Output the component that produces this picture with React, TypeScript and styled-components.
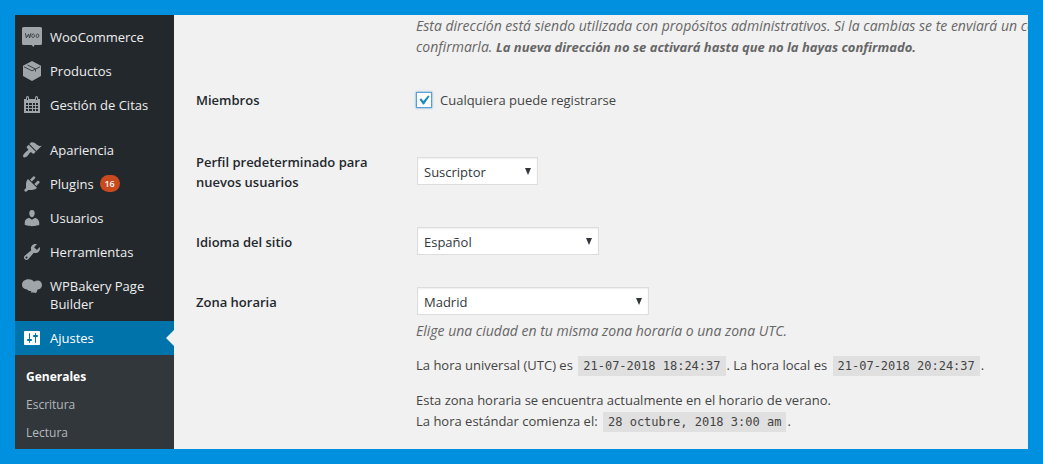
import React from "react";
import styled, { createGlobalStyle, css } from "styled-components";

const GlobalStyle = createGlobalStyle`
  *, *::before, *::after { box-sizing: border-box; }
  body {
    margin: 0;
    background: #0090e0;
    color: #444;
    font-family: "Open Sans", "Noto Sans", sans-serif;
    font-size: 13px;
    line-height: 21px;
  }
`;

const Frame = styled.div`
  display: flex;
  min-height: 100vh;
  padding: 15px;
`;

const Sidebar = styled.nav`
  flex: 0 0 159px;
  display: flex;
  flex-direction: column;
  padding-top: 5px;
  background: #23282d;
`;

const Menu = styled.ul`
  margin: 0;
  padding: 0;
  list-style: none;
`;

const MenuItem = styled.li<{ $spaced?: boolean }>`
  margin-top: ${(p) => (p.$spaced ? "11px" : "0")};
`;

const MenuLink = styled.a<{ $current?: boolean }>`
  position: relative;
  display: flex;
  align-items: flex-start;
  gap: 8px;
  padding: 7px;
  color: ${(p) => (p.$current ? "#fff" : "#eee")};
  background: ${(p) => (p.$current ? "#0073aa" : "transparent")};
  line-height: 18px;
  text-decoration: none;

  svg {
    flex: none;
    color: ${(p) => (p.$current ? "#fff" : "#a0a5aa")};
  }

  ${(p) =>
    p.$current &&
    css`
      &::after {
        content: "";
        position: absolute;
        top: 9px;
        right: 0;
        border: 8px solid transparent;
        border-left-width: 0;
        border-right-color: #f1f1f1;
      }
    `}
`;

const MenuText = styled.span`
  padding: 1px 0;
`;

const Badge = styled.span`
  display: inline-block;
  min-width: 20px;
  margin-left: 6px;
  border-radius: 10px;
  background: #ca4a1f;
  color: #fff;
  font-size: 9px;
  font-weight: 600;
  line-height: 17px;
  text-align: center;
  vertical-align: top;
`;

const SubMenu = styled.ul`
  flex: 1;
  margin: 0;
  padding: 8px 0 2px;
  background: #32373c;
  list-style: none;
`;

const SubLink = styled.a<{ $current?: boolean }>`
  display: block;
  padding: 5px 11px;
  color: ${(p) => (p.$current ? "#fff" : "#b4b9be")};
  font-size: 12px;
  font-weight: ${(p) => (p.$current ? 700 : 400)};
  line-height: 18px;
  text-decoration: none;
`;

const Content = styled.main`
  flex: 1;
  min-width: 0;
  overflow: hidden;
  padding-left: 22px;
  background: #f1f1f1;
`;

const Row = styled.div`
  display: grid;
  grid-template-columns: 190px minmax(0, 1fr);
  column-gap: 30px;
  align-items: center;
`;

const FieldLabel = styled.label`
  align-self: start;
  padding: 20px 0;
  color: #23282d;
  font-weight: 600;
  line-height: 20px;
`;

const Field = styled.div`
  grid-column: 2;
  padding: 15px 0 17px;
`;

const IntroField = styled(Field)`
  padding: 0 0 13px;
  white-space: nowrap;
`;

const Description = styled.p`
  margin: 0;
  color: #666;
  font-size: 14px;
  font-style: italic;

  ${Field} > span + & {
    margin-top: 5px;
  }

  strong {
    font-size: 13px;
    line-height: 1;
  }
`;

const Note = styled.p`
  margin: 14px 0 0;
`;

const CheckLabel = styled.label`
  display: flex;
  align-items: center;
  gap: 8px;
  line-height: 30px;
`;

const CheckWrap = styled.span`
  position: relative;
  display: flex;

  svg {
    position: absolute;
    inset: 0;
    pointer-events: none;
  }

  input:not(:checked) + svg {
    display: none;
  }
`;

const Checkbox = styled.input`
  appearance: none;
  width: 16px;
  height: 16px;
  margin: 0;
  border: 1px solid #5b9dd9;
  background: #fff;
  box-shadow: 0 0 2px rgba(30, 140, 190, 0.8);
`;

const SelectWrap = styled.span<{ $width: number }>`
  position: relative;
  display: flex;
  width: ${(p) => p.$width}px;
  max-width: 100%;
  margin-left: 1px;

  svg {
    position: absolute;
    top: 11px;
    right: 6px;
    pointer-events: none;
  }
`;

const Select = styled.select`
  appearance: none;
  width: 100%;
  height: 28px;
  padding: 2px 20px 0 6px;
  border: 1px solid #ddd;
  border-radius: 0;
  background: #fff;
  box-shadow: inset 0 1px 2px rgba(0, 0, 0, 0.07);
  color: #32373c;
  font: inherit;
`;

const Code = styled.code`
  margin: 0 1px 0 2px;
  padding: 3px 5px;
  background: #e0e0e0;
  font-family: "DejaVu Sans Mono", monospace;
  font-size: 12px;
  line-height: 1;
`;

const Icon = ({ children }: { children: React.ReactNode }) => (
  <svg width="20" height="20" viewBox="0 0 20 20" fill="currentColor" aria-hidden="true">
    {children}
  </svg>
);

const WooIcon = () => (
  <Icon>
    <path d="M1.500 0h17A1.500 1.500 0 0 1 20 1.500v15a1.500 1.500 0 0 1-1.500 1.500H12.500l-1 2L9.500 18h-8A1.500 1.500 0 0 1 0 16.500v-15A1.500 1.500 0 0 1 1.500 0z" />
    <path
      d="M3.400 6.200l1 4.800L6.600 7l.9 4L9 6.200M11.300 7c-1.100 0-1.500 1-1.500 2s.4 1.600 1.100 1.600c1.100 0 1.500-1 1.500-2s-.4-1.600-1.100-1.600zM15.700 7c-1.100 0-1.500 1-1.500 2s.4 1.600 1.100 1.600c1.100 0 1.500-1 1.500-2s-.4-1.600-1.100-1.600z"
      fill="none"
      stroke="#3c4147"
      strokeWidth="1"
    />
  </Icon>
);

const ProductIcon = () => (
  <Icon>
    <path d="M10 0l9 4.700v10.200L10 20l-9-5.100V4.700z" />
    <path d="M2 5.800l8 4 8-4M5.500 4l8 4v2.500" fill="none" stroke="#3c4147" strokeWidth="1" />
  </Icon>
);

const CalendarIcon = () => (
  <Icon>
    <path
      fillRule="evenodd"
      d="M2 4h2V2.500a1.500 1.500 0 0 1 3 0V4h6V2.500a1.500 1.500 0 0 1 3 0V4h2v14H2zM4 8v2h2V8zM7 8v2h3V8zM11 8v2h2V8zM14 8v2h2V8zM4 11v2h2v-2zM7 11v2h3v-2zM11 11v2h2v-2zM14 11v2h2v-2zM4 14v2h2v-2zM7 14v2h3v-2zM11 14v2h2v-2zM14 14v2h2v-2zM5 2.500V5h1V2.500zM14 2.500V5h1V2.500z"
    />
  </Icon>
);

const AppearanceIcon = () => (
  <Icon>
    <path d="M14.480 11.060L7.410 3.990l1.500-1.500c.5-.56 2.300-.47 3.510.32 1.210.8 1.430 1.280 2.910 2.100 1.180.64 2.450 1.260 4.450.85zm-.71.71L6.700 4.700 4.930 6.470c-.39.39-.39 1.020 0 1.410l1.060 1.060c.39.39.39 1.030 0 1.420-.6.6-1.430 1.110-2.210 1.690-.35.26-.7.53-1.010.84C1.430 14.230.4 16.080 1.400 17.070c.99 1 2.840-.03 4.180-1.360.31-.31.58-.66.85-1.020.57-.78 1.080-1.610 1.690-2.210.39-.39 1.020-.39 1.410 0l1.060 1.060c.39.39 1.020.39 1.410 0z" />
  </Icon>
);

const PluginsIcon = () => (
  <Icon>
    <path d="M13.110 4.360L9.870 7.600 8 5.730l3.240-3.240c.35-.34 1.050-.2 1.560.32.52.51.66 1.210.31 1.550zm-8 1.770l.91-1.120 9.010 9.010-1.190.84c-.71.71-2.630 1.160-3.820 1.160H6.140L4.900 17.260c-.59.59-1.540.59-2.120 0-.59-.58-.59-1.530 0-2.120l1.240-1.240v-3.880c0-1.130.4-3.190 1.090-3.890zm7.260 3.970l3.240-3.240c.34-.35 1.040-.21 1.550.31.52.51.66 1.210.31 1.550l-3.240 3.250z" />
  </Icon>
);

const UsersIcon = () => (
  <Icon>
    <path d="M10 9.250c-2.270 0-2.730-3.440-2.730-3.440C7 4.020 7.820 2 9.970 2c2.160 0 2.980 2.020 2.710 3.810 0 0-.41 3.440-2.680 3.440zM7.230 10h.05L10 11.820 12.720 10c2.390 0 4.520 2.330 4.520 4.530v2.490s-3.650 1.130-7.240 1.130c-3.650 0-7.240-1.130-7.240-1.130v-2.490c0-2.250 1.940-4.530 4.470-4.530z" />
  </Icon>
);

const ToolsIcon = () => (
  <Icon>
    <path d="M16.680 9.770c-1.340 1.340-3.300 1.670-4.950.99l-5.410 6.520c-.99.99-2.590.99-3.580 0s-.99-2.590 0-3.570l6.520-5.420c-.68-1.650-.35-3.610.99-4.950 1.280-1.280 3.120-1.620 4.720-1.060l-2.890 2.890 2.820 2.820 2.860-2.870c.53 1.580.18 3.390-1.080 4.650zM3.810 16.210c.4.39 1.040.39 1.430 0 .4-.4.4-1.040 0-1.430-.39-.4-1.030-.4-1.430 0-.39.39-.39 1.030 0 1.430z" />
  </Icon>
);

const BakeryIcon = () => (
  <Icon>
    <path d="M6.500 3.300c2.700 0 4.600 1 5.600 2.500 1-.8 2.200-1.200 3.400-1.200 2.700 0 4.500 1.900 4.500 4.400 0 2.600-1.900 4.500-4.500 4.500-.2 1.600-.8 2.800-1.700 3.500-1.400-.5-3.400-.4-5.300-.6.5-.4.800-.9.900-1.500-1.600.2-3.200-.3-4.300-1.500C2 13.100 0 11.300 0 8.900c0-3.400 2.800-5.600 6.500-5.600z" />
  </Icon>
);

const SettingsIcon = () => (
  <Icon>
    <path d="M18 16V4c0-.55-.45-1-1-1H3c-.55 0-1 .45-1 1v12c0 .55.45 1 1 1h14c.55 0 1-.45 1-1zM8 11h1c.55 0 1 .45 1 1s-.45 1-1 1H8v1.500c0 .28-.22.5-.5.5s-.5-.22-.5-.5V13H6c-.55 0-1-.45-1-1s.45-1 1-1h1V5.500c0-.28.22-.5.5-.5s.5.22.5.5V11zm5-2h-1c-.55 0-1-.45-1-1s.45-1 1-1h1V5.500c0-.28.22-.5.5-.5s.5.22.5.5V7h1c.55 0 1 .45 1 1s-.45 1-1 1h-1v5.500c0 .28-.22.5-.5.5s-.5-.22-.5-.5V9z" />
  </Icon>
);

const menu = [
  { label: "WooCommerce", icon: <WooIcon /> },
  { label: "Productos", icon: <ProductIcon /> },
  { label: "Gestión de Citas", icon: <CalendarIcon /> },
  { label: "Apariencia", icon: <AppearanceIcon />, spaced: true },
  { label: "Plugins", icon: <PluginsIcon />, count: 16 },
  { label: "Usuarios", icon: <UsersIcon /> },
  { label: "Herramientas", icon: <ToolsIcon /> },
  { label: "WPBakery Page Builder", icon: <BakeryIcon /> },
  { label: "Ajustes", icon: <SettingsIcon />, current: true },
];

const subMenu = ["Generales", "Escritura", "Lectura"];

const SelectRow = ({
  id,
  label,
  value,
  width,
  children,
}: {
  id: string;
  label: string;
  value: string;
  width: number;
  children?: React.ReactNode;
}) => (
  <Row>
    <FieldLabel htmlFor={id}>{label}</FieldLabel>
    <Field>
      <SelectWrap $width={width}>
        <Select id={id} defaultValue={value}>
          <option>{value}</option>
        </Select>
        <svg width="8" height="7" viewBox="0 0 8 7" aria-hidden="true">
          <path d="M1 0h6L4 7z" fill="#32373c" />
        </svg>
      </SelectWrap>
      {children}
    </Field>
  </Row>
);

export default function App() {
  return (
    <>
      <GlobalStyle />
      <Frame>
        <Sidebar>
          <Menu>
            {menu.map((item) => (
              <MenuItem key={item.label} $spaced={item.spaced}>
                <MenuLink href="#" $current={item.current}>
                  {item.icon}
                  <MenuText>
                    {item.label}
                    {item.count && <Badge>{item.count}</Badge>}
                  </MenuText>
                </MenuLink>
              </MenuItem>
            ))}
          </Menu>
          <SubMenu>
            {subMenu.map((label, i) => (
              <li key={label}>
                <SubLink href="#" $current={i === 0}>
                  {label}
                </SubLink>
              </li>
            ))}
          </SubMenu>
        </Sidebar>
        <Content>
          <Row>
            <IntroField>
              <Description>
                Esta dirección está siendo utilizada con propósitos administrativos. Si la cambias se te enviará un correo
                <br />
                confirmarla. <strong>La nueva dirección no se activará hasta que no la hayas confirmado.</strong>
              </Description>
            </IntroField>
          </Row>
          <Row>
            <FieldLabel htmlFor="members">Miembros</FieldLabel>
            <Field>
              <CheckLabel>
                <CheckWrap>
                  <Checkbox id="members" type="checkbox" defaultChecked />
                  <svg width="16" height="16" viewBox="0 0 16 16" aria-hidden="true">
                    <path d="M3.500 7.500l1.700-1.200 2.200 2.800L12 3.500l1.600.7L8 12.600H7z" fill="#1e8cbe" />
                  </svg>
                </CheckWrap>
                Cualquiera puede registrarse
              </CheckLabel>
            </Field>
          </Row>
          <SelectRow id="role" label="Perfil predeterminado para nuevos usuarios" value="Suscriptor" width={121} />
          <SelectRow id="language" label="Idioma del sitio" value="Español" width={182} />
          <SelectRow id="timezone" label="Zona horaria" value="Madrid" width={232}>
            <Description>Elige una ciudad en tu misma zona horaria o una zona UTC.</Description>
            <Note>
              La hora universal (UTC) es <Code>21-07-2018 18:24:37</Code>. La hora local es{" "}
              <Code>21-07-2018 20:24:37</Code>.
            </Note>
            <Note>
              Esta zona horaria se encuentra actualmente en el horario de verano.
              <br />
              La hora estándar comienza el: <Code>28 octubre, 2018 3:00 am</Code>.
            </Note>
          </SelectRow>
        </Content>
      </Frame>
    </>
  );
}
